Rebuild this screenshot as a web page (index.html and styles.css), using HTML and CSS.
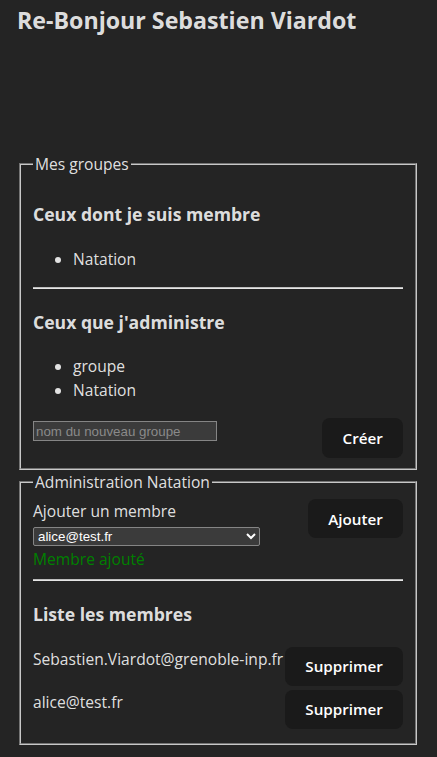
FILE: index.html
```html
<!DOCTYPE html>
<html lang="fr">
<head>
<meta charset="utf-8">
<title>Groupes</title>
<link rel="stylesheet" href="styles.css">
</head>
<body>
<div class="page">
  <h2 class="title">Re-Bonjour Sebastien Viardot</h2>

  <fieldset class="box box-groups">
    <legend>Mes groupes</legend>
    <h3 class="subtitle">Ceux dont je suis membre</h3>
    <ul class="list">
      <li>Natation</li>
    </ul>
    <hr class="sep">
    <h3 class="subtitle">Ceux que j'administre</h3>
    <ul class="list">
      <li>groupe</li>
      <li>Natation</li>
    </ul>
    <form class="create">
      <input class="create-input" type="text" placeholder="nom du nouveau groupe">
      <button class="btn" type="button">Créer</button>
    </form>
  </fieldset>

  <fieldset class="box box-admin">
    <legend>Administration Natation</legend>
    <div class="add">
      <div class="add-left">
        <div class="add-label">Ajouter un membre</div>
        <select class="add-select">
          <option>alice@test.fr</option>
          <option>Sebastien.Viardot@grenoble-inp.fr</option>
        </select>
        <div class="add-msg">Membre ajouté</div>
      </div>
      <button class="btn" type="button">Ajouter</button>
    </div>
    <hr class="sep">
    <h3 class="subtitle">Liste les membres</h3>
    <div class="member">
      <span class="member-mail">Sebastien.Viardot@grenoble-inp.fr</span>
      <button class="btn" type="button">Supprimer</button>
    </div>
    <div class="member">
      <span class="member-mail">alice@test.fr</span>
      <button class="btn" type="button">Supprimer</button>
    </div>
  </fieldset>
</div>
</body>
</html>
```
FILE: styles.css
```css
:root {
  color-scheme: dark;
  font-family: "Open Sans", sans-serif;
  font-size: 15.6px;
  line-height: 24px;
  color: rgba(255, 255, 255, 0.87);
  background-color: #242424;
}

body {
  margin: 0;
}

.page {
  padding: 0 18px 0 17px;
}

.title {
  margin: 2px 0 114px;
  font-size: 23.2px;
  line-height: 36px;
  font-weight: 700;
}

.box {
  margin: 0 2px;
  padding: 5.6px 12px 10px;
  border: 2px groove #c8c8c8;
  min-width: 0;
}

.box legend {
  padding: 0 2px;
  font-size: 15.6px;
  line-height: 24px;
}

.subtitle {
  margin: 18.72px 0;
  font-size: 17.6px;
  line-height: 28px;
  font-weight: 700;
}

.list {
  margin: 16px 0;
  padding-left: 40px;
}

.sep {
  margin: 8px 0;
  border: 0;
  border-top: 1px solid #bdbdbd;
  border-bottom: 1px solid #e6e6e6;
  height: 0;
}

.btn {
  font-family: "Open Sans", sans-serif;
  font-size: 15.2px;
  font-weight: 600;
  line-height: 18px;
  padding: 9.6px 19.2px;
  border: 1px solid transparent;
  border-radius: 8px;
  background-color: #1a1a1a;
  color: #fff;
  cursor: pointer;
}

.create {
  display: flex;
  justify-content: space-between;
  align-items: flex-start;
}

.create-input {
  margin-top: 3px;
  width: 184px;
  height: 20px;
  box-sizing: border-box;
  font-family: "Liberation Sans", Arial, sans-serif;
  font-size: 13.33px;
  padding: 1px 2px;
  border: 1px solid #858585;
  background: #3b3b3b;
  color: #fff;
}

.create-input::placeholder {
  color: #8a8a8a;
}

.add {
  display: flex;
  justify-content: space-between;
  align-items: flex-start;
}

.add-select {
  display: block;
  margin: 4px 0 1px;
  width: 227px;
  height: 19px;
  box-sizing: border-box;
  font-family: "Liberation Sans", Arial, sans-serif;
  font-size: 13.33px;
  border: 1px solid #858585;
  border-radius: 2px;
  background: #3b3b3b;
  color: #fff;
}

.add-msg {
  color: green;
}

.member {
  display: flex;
  justify-content: space-between;
  align-items: flex-start;
  margin-bottom: 4px;
}
```
